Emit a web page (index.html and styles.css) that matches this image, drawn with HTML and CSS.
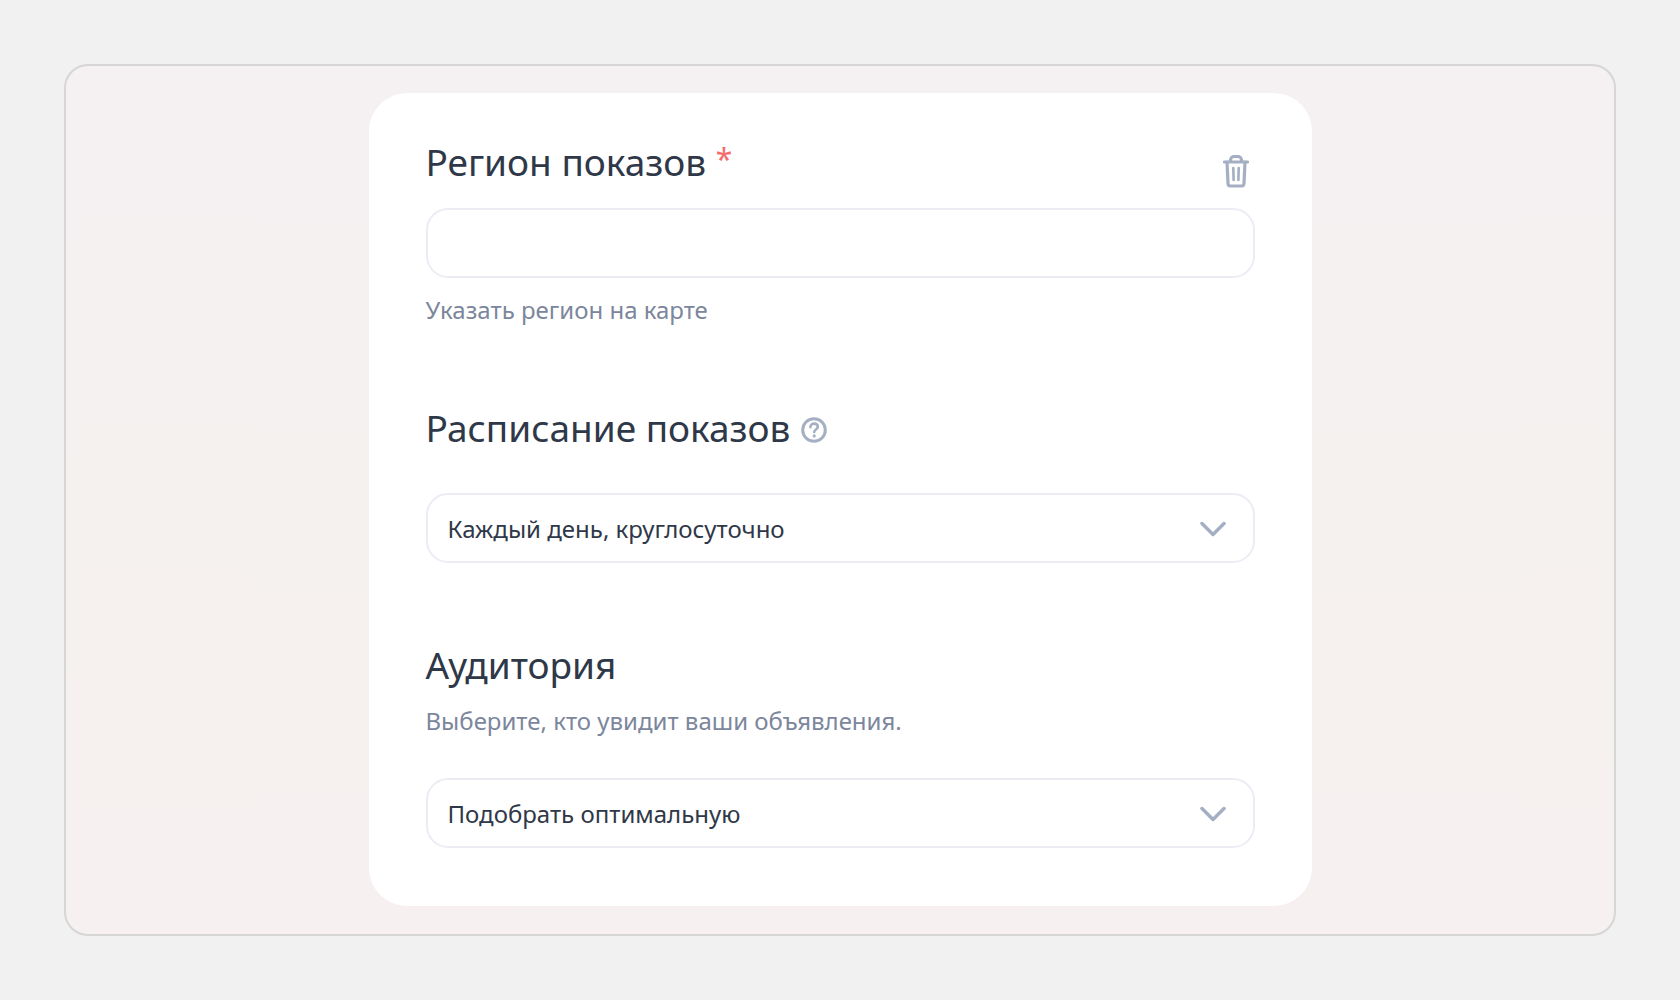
FILE: index.html
```
<!DOCTYPE html>
<html lang="ru">
<head>
  <meta charset="UTF-8">
  <meta name="viewport" content="width=device-width, initial-scale=1.0">
  <title>Регион показов</title>
  <link rel="stylesheet" href="styles.css">
</head>
<body>

  <main class="panel">
    <form class="card">

      <section class="field">
        <div class="field-head">
          <label class="title" for="region">Регион показов <span class="required">*</span></label>
          <button class="icon-btn delete-btn" type="button" aria-label="Удалить">
            <svg width="26" height="34" viewBox="0 0 26 34" fill="none" stroke="currentColor" stroke-width="3.200" stroke-linecap="round" stroke-linejoin="round">
              <path d="M1.500 8h23" />
              <path d="M7.500 7.500V6a3.500 3.500 0 0 1 3.500-3.500h4A3.500 3.500 0 0 1 18.500 6v1.500" />
              <path d="M4 8l1 21.500a2.500 2.500 0 0 0 2.500 2.500h11a2.500 2.500 0 0 0 2.500-2.500L22 8" />
              <path d="M10.300 14l.3 12M15.700 14l-.3 12" stroke-width="2.600" />
            </svg>
          </button>
        </div>
        <input class="control" type="text" id="region" required>
        <a class="hint map-link" href="#">Указать регион на карте</a>
      </section>

      <section class="field">
        <div class="field-head">
          <label class="title" for="schedule">Расписание показов</label>
          <button class="icon-btn help-btn" type="button" aria-label="Справка">
            <svg width="26" height="26" viewBox="0 0 26 26" fill="none" stroke="currentColor" stroke-linecap="round" stroke-linejoin="round">
              <circle cx="13" cy="13" r="11.300" stroke-width="3" />
              <path d="M9.400 10.200c0-2.200 1.500-3.600 3.700-3.600s3.700 1.200 3.700 3.200c0 2.700-3.600 2.700-3.600 5.200" stroke-width="2.600" />
              <circle cx="13.200" cy="18.900" r="1.600" fill="currentColor" stroke="none" />
            </svg>
          </button>
        </div>
        <div class="select">
          <select class="control" id="schedule">
            <option>Каждый день, круглосуточно</option>
          </select>
          <svg class="chevron" width="26" height="16" viewBox="0 0 26 16" fill="none" stroke="currentColor" stroke-width="3.500" stroke-linecap="round" stroke-linejoin="round">
            <path d="M2 2.500l11 11 11-11" />
          </svg>
        </div>
      </section>

      <section class="field">
        <label class="title" for="audience">Аудитория</label>
        <p class="hint">Выберите, кто увидит ваши объявления.</p>
        <div class="select">
          <select class="control" id="audience">
            <option>Подобрать оптимальную</option>
          </select>
          <svg class="chevron" width="26" height="16" viewBox="0 0 26 16" fill="none" stroke="currentColor" stroke-width="3.500" stroke-linecap="round" stroke-linejoin="round">
            <path d="M2 2.500l11 11 11-11" />
          </svg>
        </div>
      </section>

    </form>
  </main>

</body>
</html>
```
FILE: styles.css
```
* {
  box-sizing: border-box;
}
body {
  margin: 0;
  padding: 64px;
  background-color: #f1f1f1;
  font-family: "Noto Sans", sans-serif;
  color: #2f3848;
}
.panel {
  padding: 27px 24px 28px;
  border: 2px solid #d6d6d6;
  border-radius: 24px;
  background: linear-gradient(#f5f1f3, #f5f1ef 50%, #f6f1f0);
}
.card {
  max-width: 943px;
  margin: 0 auto;
  padding: 45px 57px 58px;
  border-radius: 38px;
  background-color: white;
}
.field {
  display: flex;
  flex-direction: column;
}
.field + .field {
  margin-top: 78px;
}
.field-head {
  display: flex;
  align-items: flex-start;
}
.title {
  font-size: 37px;
  line-height: 48px;
}
.required {
  font-size: 30px;
  line-height: 1;
  vertical-align: 6px;
  color: #f46a6a;
}
.hint {
  margin: 16px 0 0;
  font-size: 24px;
  line-height: 32px;
  color: #7c869c;
}
.map-link {
  align-self: flex-start;
  text-decoration: none;
}
.map-link:hover {
  text-decoration: underline;
}
.icon-btn {
  display: flex;
  padding: 0;
  border: none;
  background: none;
  color: #a5afc3;
  cursor: pointer;
}
.delete-btn {
  margin: 16px 6px 0 auto;
}
.help-btn {
  margin: 13px 0 0 11px;
}
.control {
  width: 100%;
  height: 70px;
  padding: 0 20px;
  border: 2px solid #ecedf4;
  border-radius: 22px;
  background-color: white;
  font-family: inherit;
  font-size: 24px;
  color: inherit;
}
.field-head + .control {
  margin-top: 20px;
}
.select {
  position: relative;
  margin-top: 41px;
}
select.control {
  display: block;
  appearance: none;
  cursor: pointer;
}
.chevron {
  position: absolute;
  top: 28px;
  right: 29px;
  color: #a5afc3;
  pointer-events: none;
}

@media (max-width: 700px) {
  body {
    padding: 12px;
  }
  .card {
    padding: 24px;
  }
  .title {
    font-size: 26px;
  }
}
```
